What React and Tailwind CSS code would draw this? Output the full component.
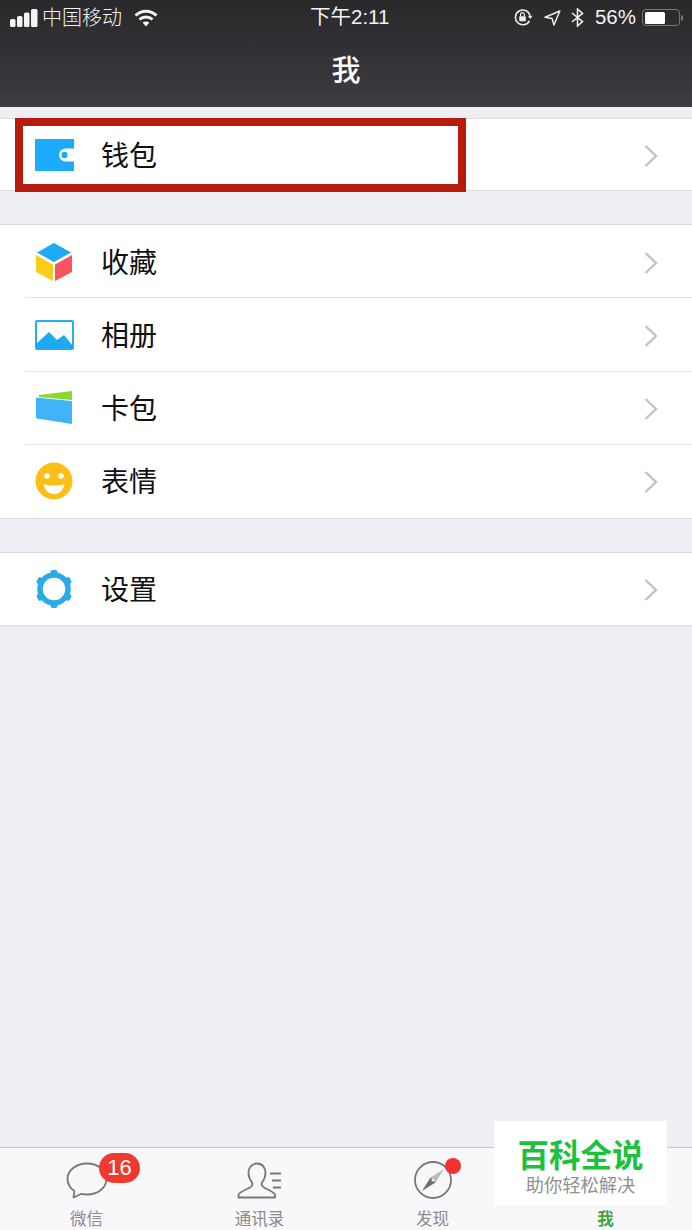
const cjk = "font-['Liberation_Sans','Noto_Sans_CJK_SC',sans-serif]";

const SignalIcon = () => (
  <svg width="28" height="18" viewBox="0 0 28 18" fill="#f4f4f4">
    <rect x="0" y="10" width="5.5" height="8" rx="1.5" />
    <rect x="7" y="7" width="5.5" height="11" rx="1.5" />
    <rect x="14" y="3.5" width="5.5" height="14.5" rx="1.5" />
    <rect x="21" y="0" width="6.5" height="18" rx="1.5" />
  </svg>
);

const WifiIcon = () => (
  <svg width="24" height="18" viewBox="0 0 24 18" fill="none" stroke="#f4f4f4" strokeWidth="3">
    <path d="M1.5 6.5C7.5 0.8 16.5 0.8 22.5 6.5" />
    <path d="M5.5 10.5C9 7.3 15 7.3 18.5 10.5" />
    <path d="M12 17.5L8.6 13.6C10.5 12.2 13.5 12.2 15.4 13.6Z" fill="#f4f4f4" stroke="none" />
  </svg>
);

const RotationLockIcon = () => (
  <svg width="19" height="17" viewBox="0 0 19 17" fill="none" stroke="#eeeeee" strokeWidth="1.6">
    <path d="M15.4 11.8A7.4 7.4 0 1 1 16 6.5" />
    <path d="M13.8 6.8L18.6 6.8L16.2 10Z" fill="#eeeeee" stroke="none" />
    <rect x="5.2" y="7.2" width="6.6" height="5" rx="0.8" fill="#eeeeee" stroke="none" />
    <path d="M6.6 7.2V5.6A1.9 1.9 0 0 1 10.4 5.6V7.2" strokeWidth="1.2" />
  </svg>
);

const LocationIcon = () => (
  <svg width="17" height="16" viewBox="0 0 17 16" fill="none" stroke="#eeeeee" strokeWidth="1.5" strokeLinejoin="round">
    <path d="M15.8 1L1 7.2L8 8.4L10 15Z" />
  </svg>
);

const BluetoothIcon = () => (
  <svg width="13" height="19" viewBox="0 0 13 19" fill="none" stroke="#eeeeee" strokeWidth="1.6">
    <path d="M1 5L11.5 13.6L6.5 18V1L11.5 5.4L1 14" />
  </svg>
);

const Battery = () => (
  <div className="flex items-center">
    <div className="w-[38px] h-[17px] rounded-[4px] border border-[#77777b] p-[1.5px]">
      <div className="w-[20px] h-full rounded-[1.5px] bg-white" />
    </div>
    <div className="ml-[1px] w-[2px] h-[6px] rounded-r-sm bg-[#77777b]" />
  </div>
);

const WalletIcon = () => (
  <svg width="40" height="32" viewBox="0 0 40 32" className="translate-x-px">
    <path d="M0 0H39V9.5H30.5A6.5 6.5 0 0 0 30.5 22.5H39V32H0Z" fill="#1aabfa" />
    <ellipse cx="29.5" cy="16" rx="3" ry="3.2" fill="#1aabfa" />
  </svg>
);

const CubeIcon = () => (
  <svg width="36" height="38" viewBox="0 0 36 38">
    <path d="M18 0L35 9.5L18 19L1 9.5Z" fill="#1eaaf1" />
    <path d="M0 12L17 21.5V38L0 29Z" fill="#fdcb1b" />
    <path d="M19 21.5L36 12V29L19 38Z" fill="#f9545b" />
  </svg>
);

const PhotoIcon = () => (
  <svg width="39" height="30" viewBox="0 0 39 30">
    <rect x="1" y="1" width="37" height="28" rx="1" fill="#fff" stroke="#25aef2" strokeWidth="2" />
    <path d="M1 24L14 12L22 20L29 15L38 26V29H1Z" fill="#1eaaf1" />
  </svg>
);

const CardIcon = () => (
  <svg width="37" height="34" viewBox="0 0 37 34">
    <path d="M3 4L36 0V9L3 6Z" fill="#89d82a" />
    <path d="M0 6.5L36 10V33L1 27.5Q0 27 0 26Z" fill="#41b4f8" />
  </svg>
);

const SmileIcon = () => (
  <svg width="38" height="38" viewBox="0 0 38 38">
    <circle cx="19" cy="19" r="18.5" fill="#fbbf17" />
    <circle cx="12" cy="14" r="2.8" fill="#fff" />
    <circle cx="26" cy="14" r="2.8" fill="#fff" />
    <path d="M8.5 22C14.5 24 23.5 24 29.5 22C28.5 28 24.5 32 19 32C13.5 32 9.5 28 8.5 22Z" fill="#fff" />
  </svg>
);

const GearIcon = () => (
  <svg width="40" height="40" viewBox="0 0 40 40">
    <g fill="#29abe8">
      <rect x="16.5" y="1" width="7" height="38" rx="2" />
      <rect x="16.5" y="1" width="7" height="38" rx="2" transform="rotate(60 20 20)" />
      <rect x="16.5" y="1" width="7" height="38" rx="2" transform="rotate(120 20 20)" />
    </g>
    <circle cx="20" cy="20" r="14" fill="#fff" stroke="#29abe8" strokeWidth="5.5" />
  </svg>
);

const Chevron = () => (
  <svg width="14" height="22" viewBox="0 0 14 22" fill="none" stroke="#c2c2c6" strokeWidth="2.4">
    <path d="M1.5 1L12 11L1.5 21" />
  </svg>
);

const Row = ({ icon, label, divider, height = "h-[73.25px]" }) => (
  <div className={`relative flex items-center ${height}`}>
    <div className="w-[108px] h-full flex items-center justify-center shrink-0">{icon}</div>
    <span className="ml-[-7px] mt-[4px] text-[28px] leading-none text-[#111111]">{label}</span>
    <div className="ml-auto mr-[34px] mt-[2px]">
      <Chevron />
    </div>
    {divider && <div className="absolute left-[25px] right-0 bottom-0 h-px bg-[#e2e2e5]" />}
  </div>
);

const Group = ({ className, children }) => (
  <div className={`bg-white border-y border-[#dedee1] ${className}`}>{children}</div>
);

const ChatIcon = () => (
  <svg width="42" height="37" viewBox="0 0 42 37" fill="none" stroke="#77777b" strokeWidth="1.8" strokeLinejoin="round">
    <path d="M21 1.5C10 1.5 1.5 8.5 1.5 17C1.5 22.5 5 26.8 8.5 29.2L7.5 35.5L15.5 31.8C17.2 32.3 19 32.5 21 32.5C32 32.5 40.5 25.5 40.5 17C40.5 8.5 32 1.5 21 1.5Z" />
  </svg>
);

const ContactIcon = () => (
  <svg width="45" height="37" viewBox="0 0 45 37" fill="none" stroke="#77777b" strokeWidth="1.8" strokeLinejoin="round">
    <path d="M20 1.5C14.5 1.5 11.5 6 11.5 11C11.5 15.5 13.5 18.5 15 20.5C16 22.5 15.5 24 13 25.5C9 27.5 3.5 29.5 1.5 32.5V35.5H38V32.5C36 29.5 31 27.5 27 25.5C24.5 24 24 22.5 25 20.5C26.5 18.5 28.5 15.5 28.5 11C28.5 6 25.5 1.5 20 1.5Z" />
    <path d="M33 11.5H44M35 18.5H44M36 25.5H44" strokeWidth="2" />
  </svg>
);

const CompassIcon = () => (
  <svg width="38" height="38" viewBox="0 0 38 38" fill="none">
    <circle cx="19" cy="19" r="18" stroke="#77777b" strokeWidth="1.8" />
    <path d="M30 8L21.5 21.5L16.5 16.5Z" fill="#bbbbbf" />
    <path d="M8 30L16.5 16.5L21.5 21.5Z" fill="#6d6d72" />
    <circle cx="19" cy="19" r="1.5" fill="#f2f2f4" />
  </svg>
);

const Tab = ({ icon, label, active, children }) => (
  <div className="relative flex flex-col items-center pt-[13px]">
    <div className="h-[38px] flex items-center justify-center">{icon}</div>
    <span className={`mt-[10px] text-[16.5px] leading-5 ${active ? "font-bold text-[#3fa43f]" : "text-[#8a8a8e]"}`}>{label}</span>
    {children}
  </div>
);

export default function App() {
  return (
    <div className={`flex flex-col min-h-[1230px] bg-[#eeeef4] ${cjk}`}>
      <header className="h-[107px] shrink-0 bg-gradient-to-b from-[#29292c] to-[#3c3c41] text-[#f4f4f4]">
        <div className="flex items-center h-[35px] pl-[10px] pr-[9px]">
          <div className="flex items-center w-[300px]">
            <SignalIcon />
            <span className="ml-[4px] text-[20px] leading-none font-light">中国移动</span>
            <div className="ml-[12px]">
              <WifiIcon />
            </div>
          </div>
          <span className="text-[20.5px] leading-none">下午2:11</span>
          <div className="ml-auto flex items-center">
            <RotationLockIcon />
            <div className="ml-[11px]">
              <LocationIcon />
            </div>
            <div className="ml-[10px]">
              <BluetoothIcon />
            </div>
            <span className="ml-[11px] mr-[6px] text-[20.5px] leading-none">56%</span>
            <Battery />
          </div>
        </div>
        <div className="flex justify-center mt-[5px]">
          <span className="text-[29px] leading-[62px] font-medium text-white">我</span>
        </div>
      </header>

      <main className="relative flex-1">
        <Group className="mt-[11px]">
          <Row icon={<WalletIcon />} label="钱包" height="h-[71px]" />
        </Group>
        <Group className="mt-[33px]">
          <Row icon={<CubeIcon />} label="收藏" divider />
          <Row icon={<PhotoIcon />} label="相册" divider />
          <Row icon={<CardIcon />} label="卡包" divider />
          <Row icon={<SmileIcon />} label="表情" />
        </Group>
        <Group className="mt-[33px]">
          <Row icon={<GearIcon />} label="设置" height="h-[72px]" />
        </Group>
        {/* red highlight drawn over the first row */}
        <div className="absolute left-[15px] top-[11px] w-[451px] h-[74px] border-8 border-[#b51c0e]" />
      </main>

      <nav className="relative h-[83px] shrink-0 grid grid-cols-4 bg-[#f8f8fa] border-t border-[#c6c6ca]">
        <Tab icon={<ChatIcon />} label="微信">
          <div className="absolute left-[99px] top-[5px] w-[41px] h-[30px] rounded-full bg-[#f0392f] text-white text-[22px] leading-[30px] text-center">16</div>
        </Tab>
        <Tab icon={<ContactIcon />} label="通讯录" />
        <Tab icon={<CompassIcon />} label="发现">
          <div className="absolute left-[99px] top-[10px] w-4 h-4 rounded-full bg-[#f23030]" />
        </Tab>
        <Tab icon={null} label="我" active />
        {/* watermark stuck over the bottom right corner */}
        <div className="absolute left-[494px] top-[-27px] w-[173px] h-[84px] bg-white flex flex-col items-center pt-[17px]">
          <span className="text-[31.5px] leading-[36px] font-bold text-[#1cc13c] whitespace-nowrap">百科全说</span>
          <span className="text-[18.25px] leading-[24px] text-[#909090] whitespace-nowrap">助你轻松解决</span>
        </div>
      </nav>
    </div>
  );
}
